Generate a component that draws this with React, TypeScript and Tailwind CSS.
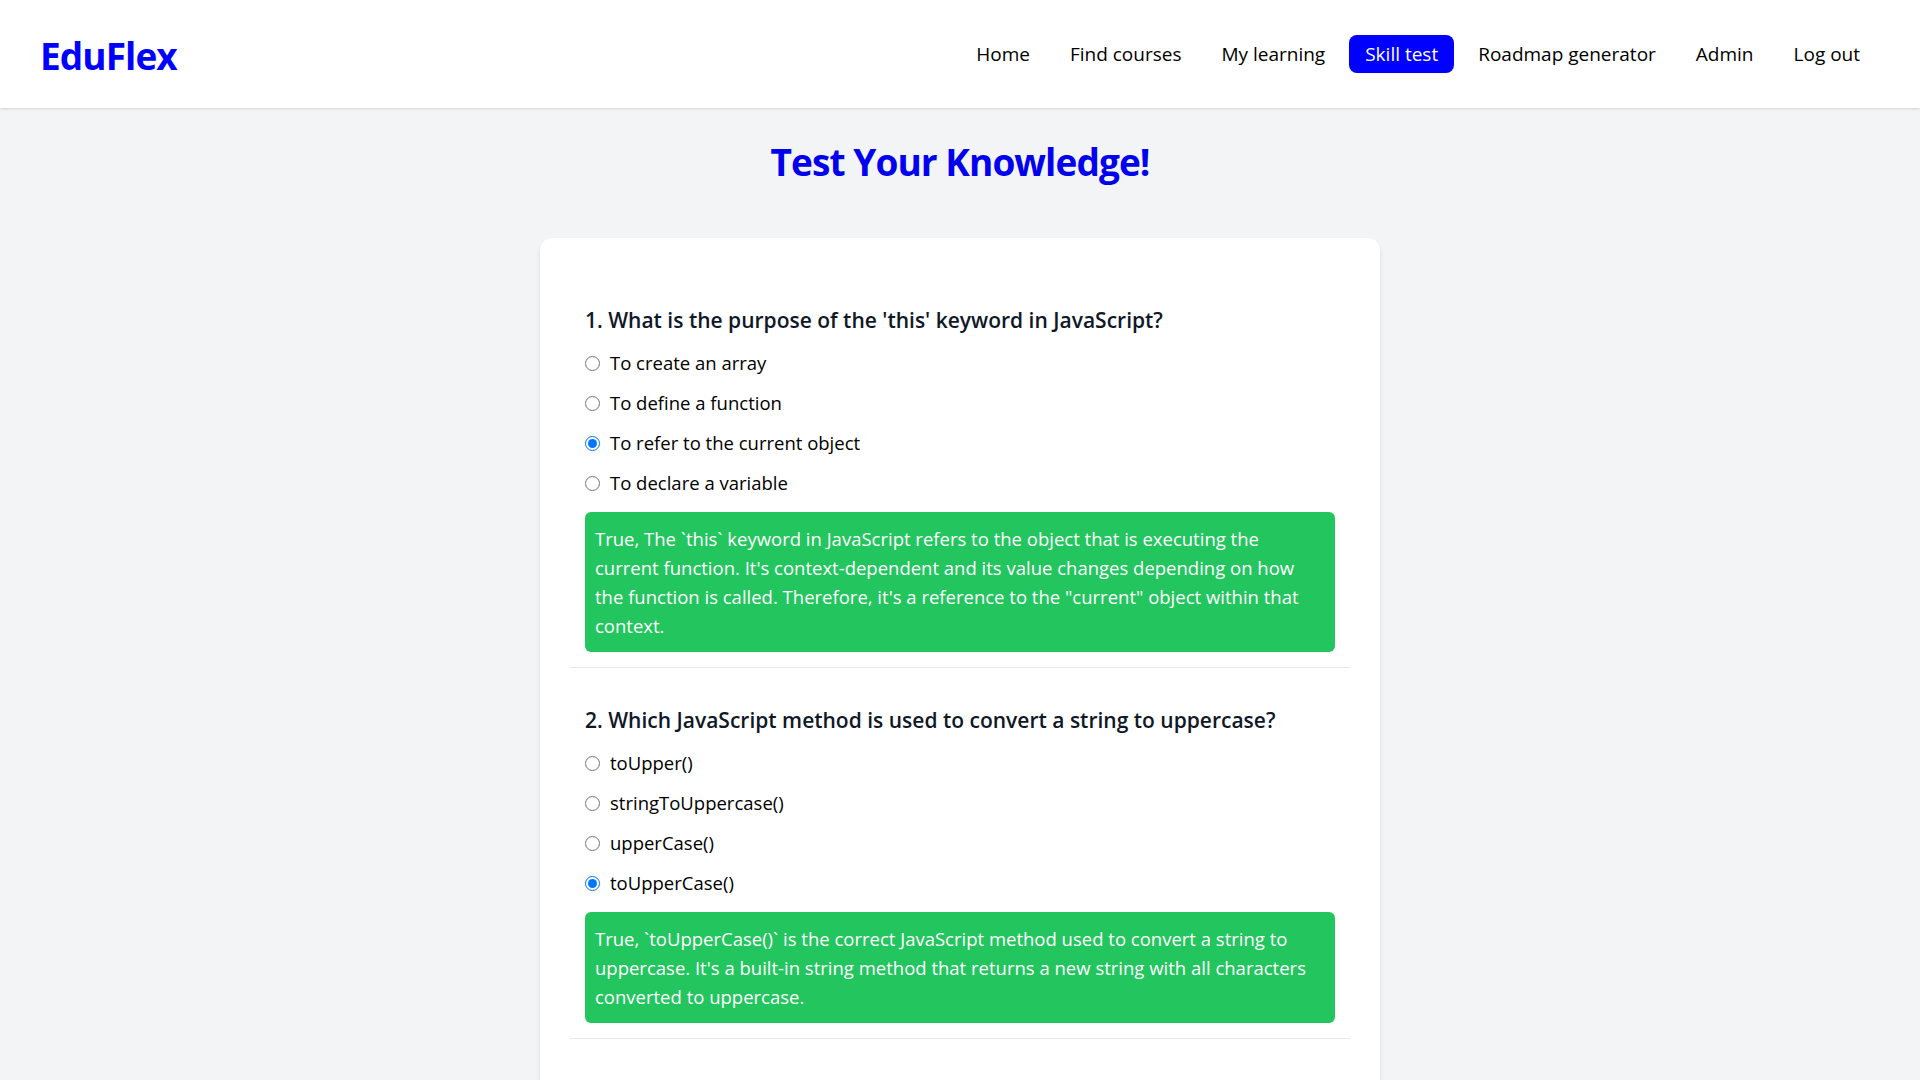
const navItems = ["Home", "Find courses", "My learning", "Skill test", "Roadmap generator", "Admin", "Log out"];

type Question = {
  text: string;
  options: string[];
  picked: number;
  feedback: string;
};

const questions: Question[] = [
  {
    text: "1. What is the purpose of the 'this' keyword in JavaScript?",
    options: ["To create an array", "To define a function", "To refer to the current object", "To declare a variable"],
    picked: 2,
    feedback:
      "True, The `this` keyword in JavaScript refers to the object that is executing the current function. It's context-dependent and its value changes depending on how the function is called. Therefore, it's a reference to the \"current\" object within that context.",
  },
  {
    text: "2. Which JavaScript method is used to convert a string to uppercase?",
    options: ["toUpper()", "stringToUppercase()", "upperCase()", "toUpperCase()"],
    picked: 3,
    feedback:
      "True, `toUpperCase()` is the correct JavaScript method used to convert a string to uppercase. It's a built-in string method that returns a new string with all characters converted to uppercase.",
  },
];

function QuestionBlock({ q }: { q: Question }) {
  return (
    <div className="px-[15px] pt-[38px] pb-[15px] border-b border-gray-200">
      <p className="text-[21px] leading-7 font-semibold text-gray-900 mb-[15px]">{q.text}</p>
      <div className="flex flex-col gap-3">
        {q.options.map((opt, i) => (
          <label key={opt} className="flex items-center gap-[10px] text-[18.5px] leading-7 text-black">
            <input type="radio" name={q.text} defaultChecked={i === q.picked} className="m-0 w-[15px] h-[15px] accent-[#0075ff]" />
            {opt}
          </label>
        ))}
      </div>
      <div className="mt-[15px] bg-[#22c55e] text-white rounded-md px-[10px] py-3 text-[18.5px] leading-[29px]">
        {q.feedback}
      </div>
    </div>
  );
}

export default function App() {
  return (
    <div className="min-h-screen bg-gray-100" style={{ fontFamily: '"Segoe UI", "Open Sans", sans-serif' }}>
      <header className="h-[108px] bg-white shadow-sm flex items-center justify-between pl-10 pr-11">
        <h1 className="text-[37px] font-bold text-[#0000ff] tracking-tight mt-1">EduFlex</h1>
        <nav className="flex items-center gap-2">
          {navItems.map((item) => (
            <a
              key={item}
              href="#"
              className={
                item === "Skill test"
                  ? "px-4 py-[5px] rounded-lg bg-[#0000ff] text-white text-[19px]"
                  : "px-4 py-[5px] text-[19px] text-black"
              }
            >
              {item}
            </a>
          ))}
        </nav>
      </header>
      <main className="flex flex-col items-center pt-[34px] pb-10">
        <h2 className="text-[37px] leading-10 font-bold text-[#0000ee] tracking-tight">Test Your Knowledge!</h2>
        <div className="mt-[56px] w-[840px] bg-white rounded-xl shadow-md px-[30px] pt-[30px] pb-20">
          {questions.map((q) => (
            <QuestionBlock key={q.text} q={q} />
          ))}
        </div>
      </main>
    </div>
  );
}
